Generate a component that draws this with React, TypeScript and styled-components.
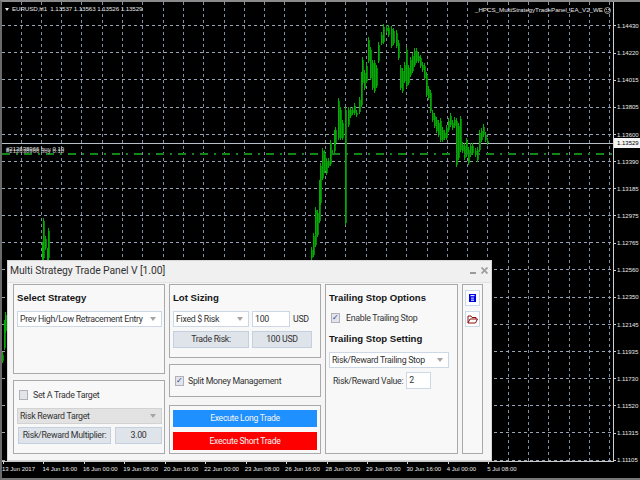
import styled, { createGlobalStyle } from "styled-components";

const GlobalStyle = createGlobalStyle`
  html, body {
    margin: 0;
    padding: 0;
    background: #000;
  }
`;

const Screen = styled.div`
  width: 640px;
  height: 480px;
  box-sizing: border-box;
  background: #000;
  border-left: 2px solid #6a6a6a;
  border-top: 2px solid #8a8a8a;
  border-bottom: 2px solid #777;
  display: grid;
  grid-template-columns: 611px 1fr;
  grid-template-rows: 460px 1fr;
  font-family: "Liberation Sans", Arial, sans-serif;
  overflow: hidden;
  position: relative;
`;

const Chart = styled.div`
  position: relative;
  border-bottom: 1px solid #c8c8c8;
`;

const ChartDrawing = styled.svg`
  display: block;
  width: 611px;
  height: 460px;
`;

const Legend = styled.div`
  position: absolute;
  left: 3px;
  top: 3px;
  display: flex;
  align-items: center;
  gap: 2px;
  color: #e4e4e4;
  font-size: 6.2px;
  letter-spacing: -0.08px;
  line-height: 8px;
  white-space: pre;
`;

const LegendArrow = styled.span`
  width: 0;
  height: 0;
  border-left: 2px solid transparent;
  border-right: 2px solid transparent;
  border-top: 3px solid #eee;
  margin-right: 1px;
`;

const ExpertName = styled.div`
  position: absolute;
  right: 2px;
  top: 4px;
  display: flex;
  align-items: center;
  gap: 1px;
  color: #e4e4e4;
  font-size: 6.2px;
  line-height: 8px;
`;

const Smiley = styled.svg`
  width: 7px;
  height: 7px;
`;

const OrderLabel = styled.div`
  position: absolute;
  left: 4px;
  top: 143px;
  color: #e0e0e0;
  font-size: 6px;
  line-height: 8px;
  white-space: nowrap;
  text-shadow: 0 2px 0 #c8c8c8;
`;

const PriceAxis = styled.div`
  position: relative;
  border-left: 1px solid #d0d0d0;
  padding-top: 10.4px;
`;

const PriceTick = styled.div`
  height: 27.15px;
  display: flex;
  align-items: center;
  gap: 1px;
  color: #e8e8e8;
  font-size: 6px;
  &::before {
    content: "";
    width: 2px;
    height: 1px;
    background: #d0d0d0;
  }
`;

const CurrentPrice = styled.div`
  position: absolute;
  left: 0;
  top: 136px;
  width: 26px;
  height: 10px;
  background: #f4f4f4;
  color: #000;
  font-size: 6px;
  line-height: 10px;
  padding-left: 3px;
`;

const TimeAxis = styled.div`
  grid-column: 1 / 3;
  display: flex;
  align-items: flex-start;
  color: #e8e8e8;
  font-size: 6px;
`;

const TimeTick = styled.div`
  width: 40.45px;
  flex: none;
  box-sizing: border-box;
  position: relative;
  padding-top: 3px;
  line-height: 9px;
  white-space: nowrap;
  &::before {
    content: "";
    position: absolute;
    left: 1px;
    top: 0;
    width: 1px;
    height: 2px;
    background: #d0d0d0;
  }
`;

const Panel = styled.div`
  position: absolute;
  left: 5px;
  top: 258px;
  width: 485px;
  height: 201px;
  box-sizing: border-box;
  background: #f0f0f0;
  border: 1px solid #d6d6d6;
  display: flex;
  flex-direction: column;
`;

const TitleBar = styled.div`
  height: 21px;
  flex: none;
  display: flex;
  align-items: center;
  justify-content: space-between;
  padding: 0 3px 3px 2px;
  box-sizing: border-box;
  color: #333;
  font-size: 10.4px;
  letter-spacing: -0.1px;
  font-family: Roboto, "Liberation Sans", sans-serif;
`;

const WindowButtons = styled.div`
  display: flex;
  align-items: center;
  gap: 5px;
`;

const MinimizeMark = styled.span`
  width: 6px;
  height: 2px;
  background: #9a9a9a;
  margin-top: 5px;
`;

const CloseMark = styled.svg`
  width: 7px;
  height: 7px;
`;

const PanelBody = styled.div`
  flex: 1;
  background: #f5f5f5;
  border-top: 1px solid #e2e2e2;
  padding: 1px 8px 6px 5px;
  display: flex;
  gap: 4px;
`;

const Column = styled.div<{ $width: number }>`
  width: ${(p) => p.$width}px;
  display: flex;
  flex-direction: column;
  gap: 6px;
`;

const Group = styled.div<{ $height: number; $gap?: number; $center?: boolean; $pushed?: boolean; $side?: boolean }>`
  height: ${(p) => p.$height}px;
  box-sizing: border-box;
  flex: none;
  background: #f8f8f8;
  border: 1px solid #a9a9a9;
  padding: ${(p) => (p.$side ? "5px 3px 3px 2px" : "3px")};
  margin-top: ${(p) => (p.$pushed ? 2 : 0)}px;
  display: flex;
  flex-direction: column;
  justify-content: ${(p) => (p.$center ? "center" : "flex-start")};
  gap: ${(p) => p.$gap ?? 4}px;
  color: #333;
  font-family: Roboto, "Liberation Sans", sans-serif;
  font-size: 8.8px;
  letter-spacing: -0.3px;
`;

const Heading = styled.div<{ $pushed?: boolean }>`
  color: #151515;
  font-family: "Liberation Sans", sans-serif;
  font-weight: 700;
  font-size: 9.6px;
  letter-spacing: 0;
  line-height: 18px;
  height: 18px;
  margin-top: ${(p) => (p.$pushed ? 1 : 1)}px;
  white-space: nowrap;
`;

const Row = styled.div<{ $gap?: number; $indent?: number; $height?: number }>`
  display: flex;
  align-items: center;
  gap: ${(p) => p.$gap ?? 3}px;
  padding-left: ${(p) => p.$indent ?? 0}px;
  min-height: ${(p) => p.$height ?? 0}px;
  white-space: nowrap;
`;

const Select = styled.div<{ $width: number; $disabled?: boolean }>`
  width: ${(p) => p.$width}px;
  height: 16px;
  box-sizing: border-box;
  flex: none;
  padding: 0 3px 0 2px;
  display: flex;
  align-items: center;
  justify-content: space-between;
  background: ${(p) => (p.$disabled ? "#e2e2e2" : "#fff")};
  border: 1px solid ${(p) => (p.$disabled ? "#d2d2d2" : "#ccd8e6")};
  white-space: nowrap;
`;

const Caret = styled.span`
  width: 0;
  height: 0;
  border-left: 3px solid transparent;
  border-right: 3px solid transparent;
  border-top: 4px solid #a4a4a4;
  margin-right: 2px;
`;

const TextField = styled.div<{ $width: number; $height?: number }>`
  width: ${(p) => p.$width}px;
  height: ${(p) => p.$height ?? 16}px;
  box-sizing: border-box;
  flex: none;
  padding-left: 2px;
  line-height: ${(p) => (p.$height ?? 16) - 2}px;
  background: #fff;
  border: 1px solid #ccd8e6;
`;

const ValueBox = styled.div<{ $width: number }>`
  width: ${(p) => p.$width}px;
  height: 17px;
  box-sizing: border-box;
  flex: none;
  background: #dfe3ea;
  border: 1px solid #c4d0de;
  text-align: center;
  line-height: 15px;
`;

const CheckBox = styled.span`
  width: 9px;
  height: 10px;
  box-sizing: border-box;
  flex: none;
  background: #e2e4ea;
  border: 1px solid #b0b0b8;
  display: flex;
  align-items: center;
  justify-content: center;
  color: #2a3f9a;
  font-size: 8px;
  line-height: 8px;
`;

const TradeButton = styled.div<{ $bg: string; $height: number }>`
  width: 144px;
  height: ${(p) => p.$height}px;
  background: ${(p) => p.$bg};
  color: #f4f4f4;
  text-align: center;
  font-size: 8.6px;
  line-height: ${(p) => p.$height}px;
`;

const SideButton = styled.div`
  width: 15px;
  height: 16px;
  box-sizing: border-box;
  background: #fff;
  border: 1px solid #ccd8e6;
  display: flex;
  align-items: center;
  justify-content: center;
`;

const prices = [
  "1.14430", "1.14220", "1.14015", "1.13805", "1.13600", "1.13390", "1.13185", "1.12975", "1.12765",
  "1.12560", "1.12350", "1.12145", "1.11935", "1.11730", "1.11520", "1.11315", "1.11105",
];

const times = [
  "13 Jun 2017", "14 Jun 16:00", "16 Jun 00:00", "19 Jun 08:00", "20 Jun 16:00", "22 Jun 00:00", "23 Jun 08:00",
  "26 Jun 16:00", "28 Jun 00:00", "29 Jun 08:00", "30 Jun 16:00", "4 Jul 00:00", "5 Jul 08:00",
];

// x, top, bottom of each bar, read off the picture
const bars = [
  [2, 352, 363], [4, 320, 350], [5, 312, 333], [42, 242, 260], [43, 218, 260], [45, 236, 250], [47, 248, 260], [48, 228, 260],
  [311, 247, 260], [313, 233, 257], [315, 207, 247], [317, 210, 237], [319, 180, 223], [320, 163, 205], [322, 148, 180],
  [324, 150, 173], [326, 158, 175], [328, 158, 168], [330, 140, 166], [332, 150, 155], [334, 130, 153], [335, 127, 145],
  [338, 98, 140], [340, 107, 140], [342, 120, 140], [345, 107, 225], [348, 107, 127], [350, 107, 118], [352, 107, 115],
  [354, 103, 115], [356, 110, 117], [359, 97, 114], [361, 72, 107], [362, 57, 85], [364, 70, 90], [366, 63, 83], [368, 37, 63],
  [370, 47, 80], [372, 60, 90], [374, 60, 93], [376, 65, 88], [378, 42, 63], [381, 32, 45], [383, 24, 44], [386, 25, 33],
  [388, 25, 37], [391, 26, 48], [393, 28, 45], [396, 30, 48], [398, 40, 60], [400, 65, 90], [402, 68, 93], [404, 62, 83],
  [406, 47, 88], [408, 65, 85], [410, 57, 77], [412, 53, 73], [414, 48, 67], [416, 48, 63], [418, 53, 63], [420, 55, 68],
  [422, 62, 72], [424, 63, 80], [426, 72, 97], [428, 86, 100], [430, 90, 113], [432, 110, 122], [434, 113, 128], [436, 117, 133],
  [438, 120, 137], [440, 118, 142], [442, 127, 142], [444, 130, 140], [446, 125, 140], [448, 118, 132], [450, 113, 127],
  [452, 120, 130], [454, 117, 128], [456, 118, 167], [458, 123, 160], [460, 116, 152], [462, 142, 153], [464, 143, 160],
  [466, 138, 157], [468, 147, 165], [470, 143, 157], [472, 143, 155], [475, 148, 157], [477, 147, 162], [479, 130, 152],
  [481, 128, 142], [483, 124, 137], [485, 132, 142], [487, 138, 145],
];

const GRID_X = Array.from({ length: 30 }, (_, i) => 21 + i * 20.3);
const GRID_Y = Array.from({ length: 17 }, (_, i) => 25.6 + i * 27.15);

function ChartLines() {
  return (
    <ChartDrawing viewBox="2 2 611 460">
      <g stroke="#7f8ea3" strokeWidth="1" strokeDasharray="3 3" shapeRendering="crispEdges">
        {GRID_X.map((x) => (
          <line key={x} x1={x} y1={2} x2={x} y2={462} />
        ))}
        {GRID_Y.map((y) => (
          <line key={y} x1={2} y1={y} x2={613} y2={y} stroke="#98a4b6" />
        ))}
      </g>
      <line x1={2} y1={143.5} x2={613} y2={143.5} stroke="#b8c0ca" />
      {bars.map(([x, top, bottom]) => (
        <g key={x} shapeRendering="crispEdges">
          <rect x={x} y={top + 3} width={2} height={Math.max(bottom - top - 5, 1)} fill="#0b7d0b" />
          <rect x={x} y={top} width={1} height={bottom - top} fill="#00ad00" />
        </g>
      ))}
      <line x1={2} y1={154} x2={613} y2={154} stroke="#14861a" strokeWidth="2" strokeDasharray="8 6 2 6" shapeRendering="crispEdges" />
    </ChartDrawing>
  );
}

export default function App() {
  return (
    <Screen>
      <GlobalStyle />
      <Chart>
        <ChartLines />
        <Legend>
          <LegendArrow />
          {"EURUSD,H1  1.13537 1.13563 1.13526 1.13529"}
        </Legend>
        <ExpertName>
          _HPCS_MultiStrategyTradePanel_EA_V2_WE
          <Smiley viewBox="0 0 7 7">
            <circle cx="3.5" cy="3.5" r="3" fill="none" stroke="#ddd" strokeWidth="0.7" />
            <path d="M2 4.2 Q3.5 5.6 5 4.2" fill="none" stroke="#ddd" strokeWidth="0.6" />
            <circle cx="2.5" cy="2.6" r="0.5" fill="#ddd" />
            <circle cx="4.5" cy="2.6" r="0.5" fill="#ddd" />
          </Smiley>
        </ExpertName>
        <OrderLabel>#212638966 buy 0.10</OrderLabel>
        <Panel>
          <TitleBar>
            Multi Strategy Trade Panel V [1.00]
            <WindowButtons>
              <MinimizeMark />
              <CloseMark viewBox="0 0 7 7">
                <path d="M0.5 0.5 L6.5 6.5 M6.5 0.5 L0.5 6.5" stroke="#a0a0a0" strokeWidth="1.8" />
              </CloseMark>
            </WindowButtons>
          </TitleBar>
          <PanelBody>
            <Column $width={152}>
              <Group $height={90}>
                <Heading>Select Strategy</Heading>
                <Select $width={145}>
                  Prev High/Low Retracement Entry
                  <Caret />
                </Select>
              </Group>
              <Group $height={74} $gap={3}>
                <Row $gap={5} $indent={2} $height={21}>
                  <CheckBox />
                  Set A Trade Target
                </Row>
                <Select $width={145} $disabled>
                  Risk Reward Target
                  <Caret />
                </Select>
                <Row $gap={4} $indent={1}>
                  <ValueBox $width={93}>Risk/Reward Multiplier:</ValueBox>
                  <ValueBox $width={47}>3.00</ValueBox>
                </Row>
              </Group>
            </Column>
            <Column $width={152}>
              <Group $height={74}>
                <Heading>Lot Sizing</Heading>
                <Row>
                  <Select $width={76}>
                    Fixed $ Risk
                    <Caret />
                  </Select>
                  <TextField $width={38}>100</TextField>
                  USD
                </Row>
                <Row>
                  <ValueBox $width={76}>Trade Risk:</ValueBox>
                  <ValueBox $width={60}>100 USD</ValueBox>
                </Row>
              </Group>
              <Group $height={33} $gap={0} $center>
                <Row $gap={4} $indent={2}>
                  <CheckBox>✓</CheckBox>
                  Split Money Management
                </Row>
              </Group>
              <Group $height={49} $gap={5} $pushed>
                <TradeButton $bg="#1e90ff" $height={17} style={{ marginTop: 1 }}>Execute Long Trade</TradeButton>
                <TradeButton $bg="#ff0000" $height={18}>Execute Short Trade</TradeButton>
              </Group>
            </Column>
            <Column $width={133}>
              <Group $height={170}>
                <Heading>Trailing Stop Options</Heading>
                <Row $gap={6} $indent={2} $height={14}>
                  <CheckBox>✓</CheckBox>
                  Enable Trailing Stop
                </Row>
                <Heading $pushed>Trailing Stop Setting</Heading>
                <Select $width={120}>
                  Risk/Reward Trailing Stop
                  <Caret />
                </Select>
                <Row $gap={3} $indent={4}>
                  Risk/Reward Value:
                  <TextField $width={25} $height={17}>2</TextField>
                </Row>
              </Group>
            </Column>
            <Column $width={21}>
              <Group $height={170} $gap={5} $side>
                <SideButton>
                  <svg width="7" height="8" viewBox="0 0 7 8">
                    <rect x="0" y="0" width="7" height="8" fill="#0000e6" />
                    <rect x="1.5" y="1" width="4" height="1.2" fill="#dfe6ff" />
                    <rect x="2" y="3.6" width="3" height="1" fill="#dfe6ff" />
                    <rect x="2" y="5.6" width="3" height="1.2" fill="#dfe6ff" />
                  </svg>
                </SideButton>
                <SideButton>
                  <svg width="11" height="9" viewBox="0 0 11 9">
                    <path d="M1 8 V1 H4 L5 2.5 H9 V4 M1 8 L3 4 H10.5 L8.5 8 Z" fill="none" stroke="#8a1010" strokeWidth="1" />
                  </svg>
                </SideButton>
              </Group>
            </Column>
          </PanelBody>
        </Panel>
      </Chart>
      <PriceAxis>
        {prices.map((p) => (
          <PriceTick key={p}>{p}</PriceTick>
        ))}
        <CurrentPrice>1.13529</CurrentPrice>
      </PriceAxis>
      <TimeAxis>
        {times.map((t) => (
          <TimeTick key={t}>{t}</TimeTick>
        ))}
      </TimeAxis>
    </Screen>
  );
}
